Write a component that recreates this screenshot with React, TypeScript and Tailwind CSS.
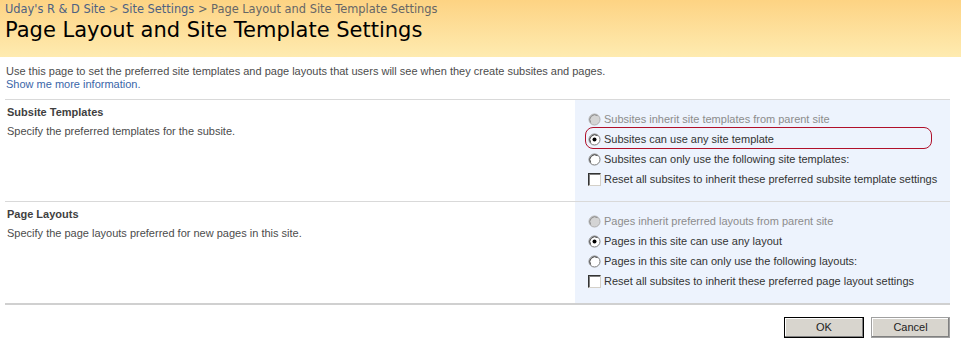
import React from "react";

const body = "font-['Liberation_Sans',Arial,sans-serif] text-[11px]";

const Radio = ({ checked = false, disabled = false }: { checked?: boolean; disabled?: boolean }) => (
  <svg width="13" height="13" viewBox="0 0 13 13" className="shrink-0">
    <circle cx="6.5" cy="6.5" r="5.5" fill={disabled ? "#d4d4d4" : "#ffffff"} stroke={disabled ? "#b0b0b0" : "#7a7a7a"} />
    <path d="M2.6 9.5 A5 5 0 0 1 9.5 2.6" fill="none" stroke={disabled ? "#8a8a8a" : "#404040"} strokeWidth="1" />
    {checked && <circle cx="6.5" cy="6.5" r="2" fill="#000" />}
  </svg>
);

const Checkbox = () => (
  <span className="inline-block h-[13px] w-[13px] shrink-0 border border-[#333] border-r-[#d4d0c8] border-b-[#d4d0c8] bg-white shadow-[inset_1px_1px_0_#808080]" />
);

type Opt = { label: string; kind: "radio" | "check"; checked?: boolean; disabled?: boolean; highlight?: boolean };

const Section = ({ title, desc, opts }: { title: string; desc: string; opts: Opt[] }) => (
  <div className="flex h-[102px] border-t border-[#d9d9d9]">
    <div className="w-[570px] pl-[2px] pt-[4px] text-[#4c4c4c]">
      <div className={`${body} font-bold text-[#3f3f3f]`}>{title}</div>
      <div className={`${body} mt-[2px]`}>{desc}</div>
    </div>
    <div className="flex w-[375px] flex-col gap-[7px] bg-[#edf3fd] pl-[13px] pt-[13px]">
      {opts.map((o) => (
        <div key={o.label} className="relative flex h-[13px] items-center gap-[3px]">
          {o.highlight && (
            <span className="absolute left-[-3px] top-[-6px] h-[22px] w-[347px] rounded-[8px] border border-[#b0102a]" />
          )}
          {o.kind === "radio" ? <Radio checked={o.checked} disabled={o.disabled} /> : <Checkbox />}
          <span className={`${body} ${o.disabled ? "text-[#8c8c8c]" : "text-[#333]"} whitespace-nowrap`}>{o.label}</span>
        </div>
      ))}
    </div>
  </div>
);

export default function App() {
  return (
    <div className="h-[351px] w-[961px] overflow-hidden bg-white">
      <div className="h-[57px] bg-gradient-to-b from-[#fdd383] to-[#feebb0] pl-[5px] pt-[2px]">
        <div className="font-['DejaVu_Sans',Verdana,sans-serif] text-[11.4px] leading-[14px] text-[#4d6182]">
          <span>Uday's R &amp; D Site</span>
          <span className="text-[#777]"> &gt; </span>
          <span>Site Settings</span>
          <span className="text-[#666]"> &gt; Page Layout and Site Template Settings</span>
        </div>
        <h1 className="font-['DejaVu_Sans',Verdana,sans-serif] text-[21px] leading-[28px] text-black">
          Page Layout and Site Template Settings
        </h1>
      </div>

      <div className="pl-[6px] pt-[8px]">
        <p className={`${body} leading-[13px] text-[#4c4c4c]`}>
          Use this page to set the preferred site templates and page layouts that users will see when they create subsites and pages.
        </p>
        <a className={`${body} block leading-[13px] text-[#3a66a8]`}>Show me more information.</a>
      </div>

      <div className="ml-[5px] mt-[8px] w-[945px]">
        <Section
          title="Subsite Templates"
          desc="Specify the preferred templates for the subsite."
          opts={[
            { label: "Subsites inherit site templates from parent site", kind: "radio", disabled: true },
            { label: "Subsites can use any site template", kind: "radio", checked: true, highlight: true },
            { label: "Subsites can only use the following site templates:", kind: "radio" },
            { label: "Reset all subsites to inherit these preferred subsite template settings", kind: "check" },
          ]}
        />
        <Section
          title="Page Layouts"
          desc="Specify the page layouts preferred for new pages in this site."
          opts={[
            { label: "Pages inherit preferred layouts from parent site", kind: "radio", disabled: true },
            { label: "Pages in this site can use any layout", kind: "radio", checked: true },
            { label: "Pages in this site can only use the following layouts:", kind: "radio" },
            { label: "Reset all subsites to inherit these preferred page layout settings", kind: "check" },
          ]}
        />
        <div className="h-[2px] bg-[#d0d0d0]" />
        <div className="flex justify-end gap-[7px] pt-[12px]">
          <button className={`${body} h-[21px] w-[80px] border border-black bg-[#d8d5ce] text-[#222] shadow-[inset_-1px_-1px_0_#808080,inset_1px_1px_0_#fff]`}>
            OK
          </button>
          <button className={`${body} h-[21px] w-[79px] border border-[#a0a0a0] bg-[#d8d5ce] text-[#222] shadow-[inset_-1px_-1px_0_#808080,inset_1px_1px_0_#fff]`}>
            Cancel
          </button>
        </div>
      </div>
    </div>
  );
}
